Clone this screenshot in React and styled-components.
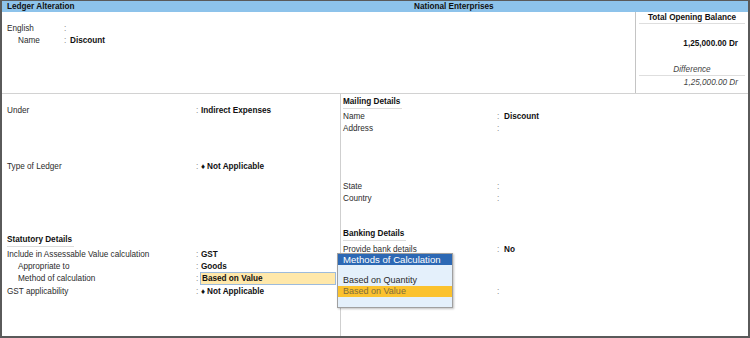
import React from "react";
import styled, { createGlobalStyle } from "styled-components";

const GlobalStyle = createGlobalStyle`
  body {
    margin: 0;
    background: #fff;
    font-family: "Liberation Sans", Arial, sans-serif;
  }
`;

const Frame = styled.div`
  width: 750px;
  height: 338px;
  box-sizing: border-box;
  border: 2px solid #5a5a5a;
  border-top-width: 1px;
  display: flex;
  flex-direction: column;
  background: #fff;
  color: #2b2b2b;
  font-size: 8.2px;
  overflow: hidden;
`;

const TitleBar = styled.div`
  height: 11px;
  flex: none;
  display: flex;
  align-items: center;
  background: #8dc3eb;
  font-weight: bold;
  color: #111;
  font-size: 8.2px;

  .left {
    width: 407px;
    padding-left: 5px;
  }
`;

const Header = styled.div`
  height: 81px;
  flex: none;
  display: flex;
`;

const HeaderInfo = styled.div`
  flex: 1;
  padding: 10px 0 0 5px;
`;

const BalancePanel = styled.div`
  width: 106px;
  border-left: 1px solid #c4c4c4;
  display: flex;
  flex-direction: column;
  padding: 0 3px;
`;

const PanelTitle = styled.div`
  text-align: center;
  font-weight: bold;
  color: #111;
  line-height: 11px;
  border-bottom: 1px solid #dedede;
`;

const Amount = styled.div`
  text-align: right;
  padding-right: 7px;
  line-height: 11px;
  margin-top: ${(p) => p.$gap || 0}px;
  font-weight: ${(p) => (p.$italic ? "normal" : "bold")};
  font-style: ${(p) => (p.$italic ? "italic" : "normal")};
  color: ${(p) => (p.$italic ? "#444" : "#111")};
`;

const PanelCaption = styled.div`
  text-align: center;
  font-style: italic;
  color: #444;
  line-height: 11px;
  margin-top: 15px;
  border-bottom: 1px solid #dedede;
`;

const Body = styled.div`
  flex: 1;
  display: grid;
  grid-template-columns: 338px 1fr;
  border-top: 1px solid #d2d2d2;
`;

const Column = styled.div`
  position: relative;
  padding: ${(p) => p.$pad};
  border-left: ${(p) => (p.$divided ? "1px solid #cfcfcf" : "none")};
`;

const Row = styled.div`
  display: grid;
  grid-template-columns: ${(p) => p.$label}px ${(p) => p.$colon}px 1fr;
  height: ${(p) => (p.$tall ? 13 : 12)}px;
  align-items: center;
  margin-top: ${(p) => p.$gap || 0}px;
  white-space: nowrap;
`;

const Label = styled.span`
  padding-left: ${(p) => (p.$indent ? 11 : 0)}px;
`;

const Colon = styled.span`
  color: #8a8a8a;
`;

const Value = styled.span`
  font-weight: bold;
  color: #111;
`;

const ActiveValue = styled.span`
  justify-self: start;
  width: 133px;
  font-weight: bold;
  color: #111;
  height: 11px;
  line-height: 11px;
  margin-left: -1px;
  padding-left: 1px;
  background: #ffe8aa;
  border: 1px solid #9dbbdc;
`;

const Diamond = styled.span`
  font-size: 8px;
  line-height: 1;
  margin-right: 2px;
`;

const SectionTitle = styled.div`
  display: inline-block;
  font-weight: bold;
  color: #111;
  line-height: 12px;
  padding-right: 2px;
  border-bottom: 1px solid #dcdcdc;
  margin-top: ${(p) => p.$gap || 0}px;
`;

const Popup = styled.div`
  position: absolute;
  left: -4px;
  top: 159px;
  width: 114px;
  border: 1px solid #a0a0a0;
  background: #e4f0fb;
  box-shadow: 1px 1px 2px rgba(0, 0, 0, 0.25);
  font-size: 9px;
  padding-bottom: 10px;
`;

const PopupTitle = styled.div`
  background: #2c68b4;
  color: #fff;
  font-size: 9.6px;
  line-height: 11px;
  padding-left: 5px;
  margin-bottom: 10px;
`;

const PopupItem = styled.div`
  line-height: 11px;
  padding-left: 5px;
  background: ${(p) => (p.$selected ? "#fbc22e" : "transparent")};
  color: ${(p) => (p.$selected ? "#7e6d3e" : "#2b2b2b")};
`;

const left = { $label: 189, $colon: 5 };
const right = { $label: 154, $colon: 7 };

export default function App() {
  return (
    <>
      <GlobalStyle />
      <Frame>
        <TitleBar>
          <span className="left">Ledger Alteration</span>
          <span>National Enterprises</span>
        </TitleBar>

        <Header>
          <HeaderInfo>
            <Row $label={57} $colon={6}>
              <Label>English</Label>
              <Colon>:</Colon>
              <span />
            </Row>
            <Row $label={57} $colon={6}>
              <Label $indent>Name</Label>
              <Colon>:</Colon>
              <Value>Discount</Value>
            </Row>
          </HeaderInfo>
          <BalancePanel>
            <PanelTitle>Total Opening Balance</PanelTitle>
            <Amount $gap={14}>1,25,000.00 Dr</Amount>
            <PanelCaption>Difference</PanelCaption>
            <Amount $italic $gap={1}>1,25,000.00 Dr</Amount>
          </BalancePanel>
        </Header>

        <Body>
          <Column $pad="10px 0 0 5px">
            <Row {...left}>
              <Label>Under</Label>
              <Colon>:</Colon>
              <Value>Indirect Expenses</Value>
            </Row>
            <Row {...left} $gap={44}>
              <Label>Type of Ledger</Label>
              <Colon>:</Colon>
              <Value><Diamond>♦</Diamond>Not Applicable</Value>
            </Row>
            <SectionTitle $gap={62}>Statutory Details</SectionTitle>
            <Row {...left} $gap={1}>
              <Label>Include in Assessable Value calculation</Label>
              <Colon>:</Colon>
              <Value>GST</Value>
            </Row>
            <Row {...left}>
              <Label $indent>Appropriate to</Label>
              <Colon>:</Colon>
              <Value>Goods</Value>
            </Row>
            <Row {...left} $tall>
              <Label $indent>Method of calculation</Label>
              <Colon>:</Colon>
              <ActiveValue>Based on Value</ActiveValue>
            </Row>
            <Row {...left}>
              <Label>GST applicability</Label>
              <Colon>:</Colon>
              <Value><Diamond>♦</Diamond>Not Applicable</Value>
            </Row>
          </Column>

          <Column $pad="2px 0 0 2px" $divided>
            <SectionTitle>Mailing Details</SectionTitle>
            <Row {...right} $gap={1}>
              <Label>Name</Label>
              <Colon>:</Colon>
              <Value>Discount</Value>
            </Row>
            <Row {...right}>
              <Label>Address</Label>
              <Colon>:</Colon>
              <span />
            </Row>
            <Row {...right} $gap={46}>
              <Label>State</Label>
              <Colon>:</Colon>
              <span />
            </Row>
            <Row {...right}>
              <Label>Country</Label>
              <Colon>:</Colon>
              <span />
            </Row>
            <div>
              <SectionTitle $gap={24}>Banking Details</SectionTitle>
            </div>
            <Row {...right} $gap={2}>
              <Label>Provide bank details</Label>
              <Colon>:</Colon>
              <Value>No</Value>
            </Row>
            <Row {...right} $gap={30}>
              <Label />
              <Colon>:</Colon>
              <span />
            </Row>

            <Popup>
              <PopupTitle>Methods of Calculation</PopupTitle>
              <PopupItem>Based on Quantity</PopupItem>
              <PopupItem $selected>Based on Value</PopupItem>
            </Popup>
          </Column>
        </Body>
      </Frame>
    </>
  );
}
